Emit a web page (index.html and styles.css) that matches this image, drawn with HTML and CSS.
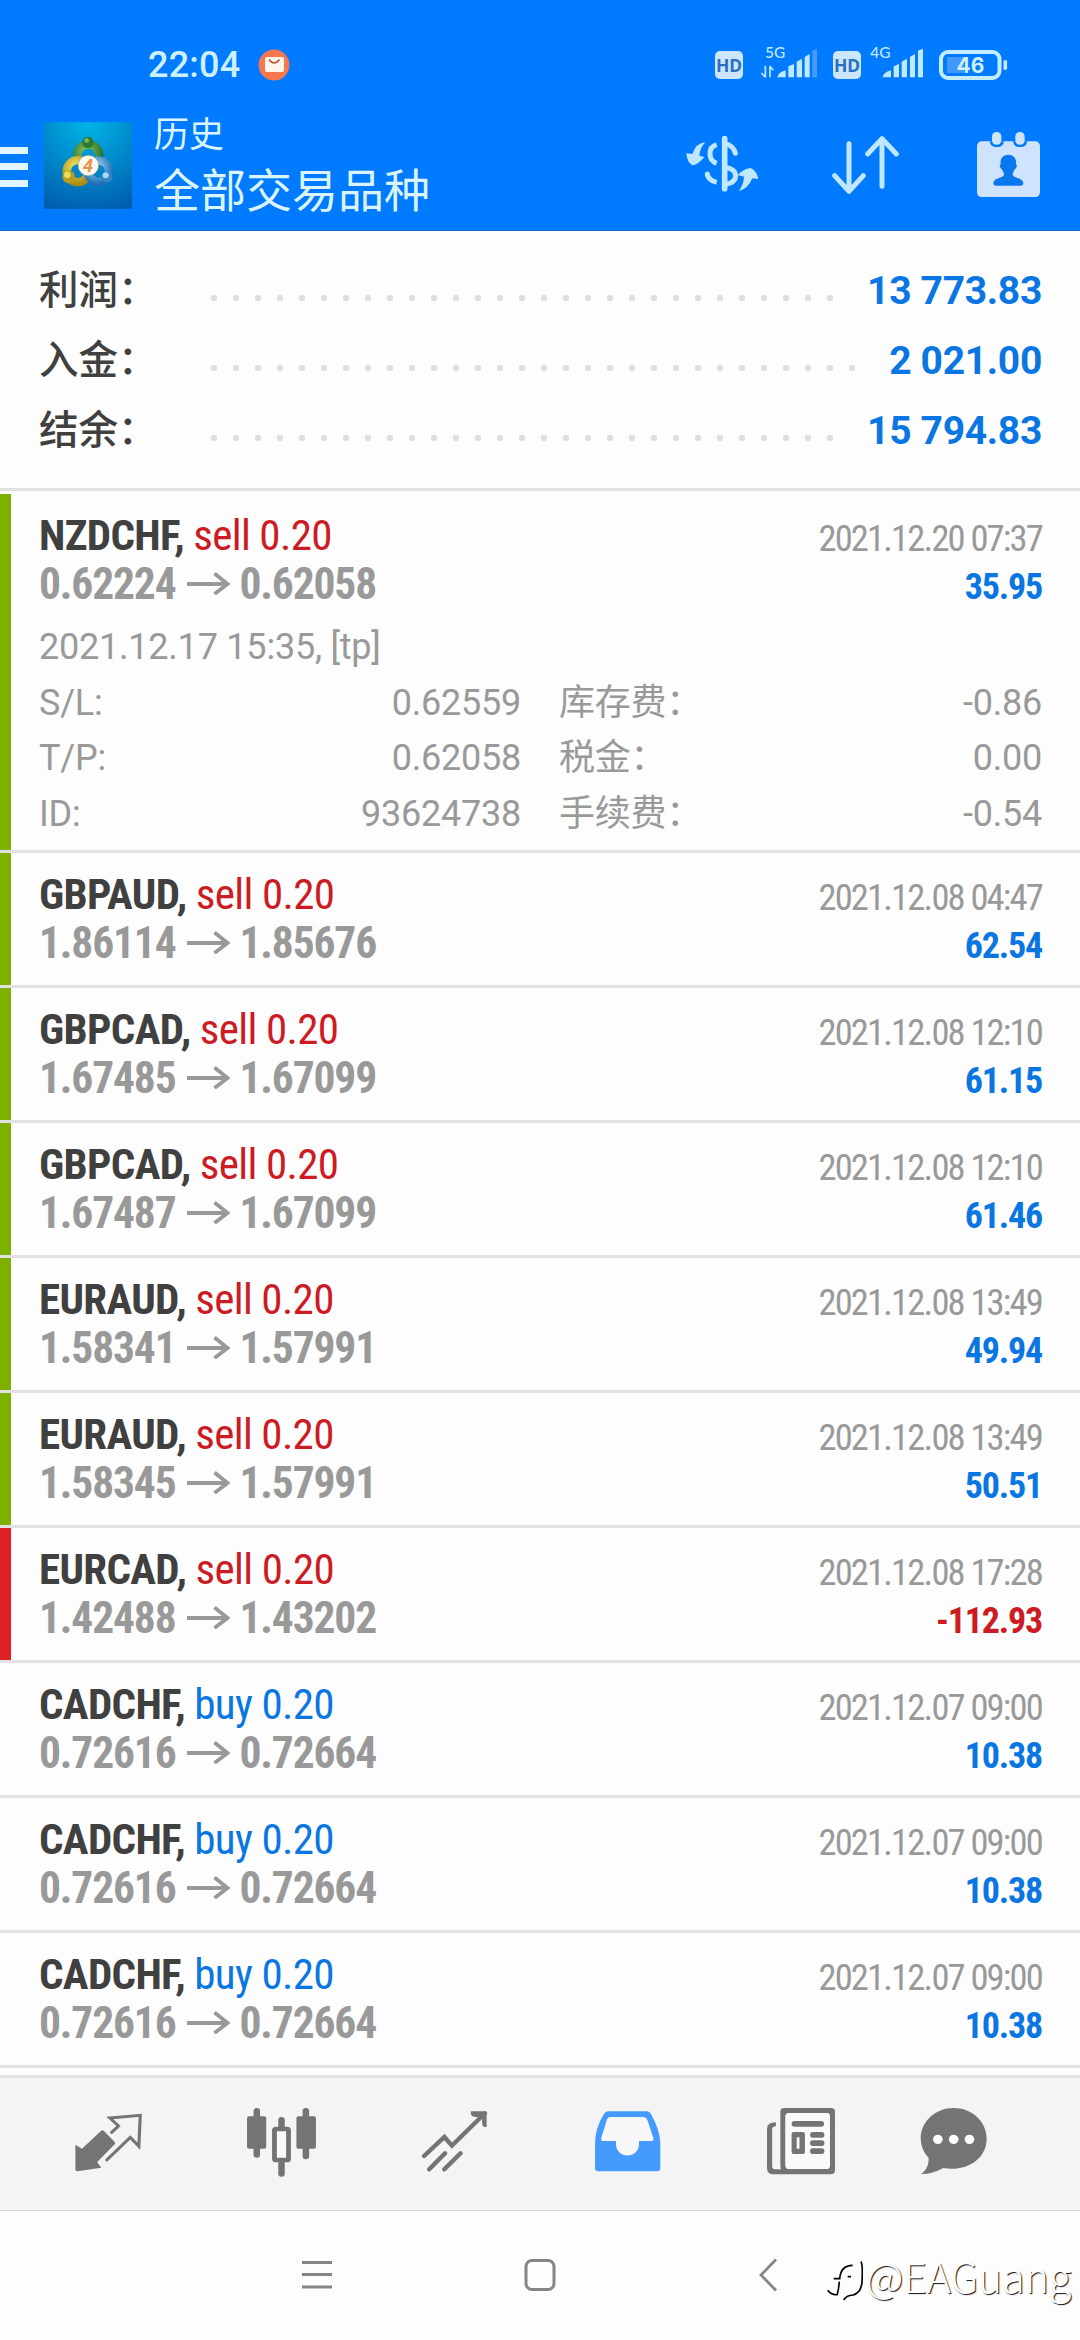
FILE: index.html
```
<!DOCTYPE html>
<html lang="zh-CN">
<head>
<meta charset="utf-8">
<title>历史</title>
<link rel="stylesheet" href="styles.css">
</head>
<body>
<header class="header">
  <div class="status">
    <span class="status__time">22:04</span>
    <svg class="status__mail" width="32" height="32" viewBox="0 0 32 32"><circle cx="16" cy="16" r="15.4" fill="#f9774f"/><rect x="7" y="8" width="19" height="15" rx="2" fill="#fff6ee"/><path d="M11 10.500q5 7 10.500 0" fill="none" stroke="#b9573c" stroke-width="1.600"/></svg>
    <svg class="status__hd" width="28" height="28" viewBox="0 0 28 28"><rect width="28" height="28" rx="5" fill="#cde6ff"/><text x="14" y="20.500" class="hd-text">HD</text></svg>
    <svg class="status__net5" width="56" height="38" viewBox="268 4 168 114"><text x="280" y="56" class="net-text">5G</text><path d="M281 78v35M282 113l-13-13M295 113V79M294 79l11 13" fill="none" stroke="#bfeaff" stroke-width="5"/><g fill="#bdeaff"><path d="M317 113q2-15 25-21v21zM350 113V80l17-7v40zM375 113V66l16-9v56zM399 113V52l15-9v70z"/></g><path d="M422 113V33l14-6v86z" fill="#4a9bff"/></svg>
    <svg class="status__hd2" width="28" height="28" viewBox="0 0 28 28"><rect width="28" height="28" rx="5" fill="#cde6ff"/><text x="14" y="20.500" class="hd-text">HD</text></svg>
    <svg class="status__net4" width="53" height="38" viewBox="597 4 159 114"><text x="598" y="56" class="net-text">4G</text><path fill="#bdeaff" d="M635 113q2-15 25-21v21zM668 113V80l16-7v40zM692 113V66l16-9v56zM717 113V52l15-9v70zM741 113V33l15-6v86z"/></svg>
    <svg class="status__battery" width="69" height="30" viewBox="0 0 69 30"><rect x="8" y="7" width="17" height="16" fill="#4398fb"/><rect x="2" y="2" width="58.500" height="26" rx="7" fill="none" stroke="#c3ecff" stroke-width="4"/><rect x="64.500" y="10" width="3.600" height="10" rx="1.800" fill="#c3ecff"/><text x="31.500" y="23" class="battery-text">46</text></svg>
  </div>
  <div class="appbar">
    <div class="menu"><i></i><i></i><i></i></div>
    <svg class="logo" width="88" height="87" viewBox="42 36 264 260">
      <defs>
        <radialGradient id="bg" cx=".5" cy="0" r="1.050"><stop offset="0" stop-color="#00b4e4"/><stop offset=".5" stop-color="#008acb"/><stop offset="1" stop-color="#005eae"/></radialGradient>
        <radialGradient id="gr" cx=".4" cy=".3" r=".8"><stop offset="0" stop-color="#8fc45c"/><stop offset="1" stop-color="#256f2c"/></radialGradient>
        <radialGradient id="ye" cx=".4" cy=".3" r=".8"><stop offset="0" stop-color="#f4ea6c"/><stop offset="1" stop-color="#a88b10"/></radialGradient>
        <radialGradient id="bl" cx=".4" cy=".3" r=".8"><stop offset="0" stop-color="#a4dcf8"/><stop offset="1" stop-color="#1e70b5"/></radialGradient>
      </defs>
      <rect x="42" y="36" width="264" height="260" fill="url(#bg)"/>
      <circle cx="175" cy="136" r="33" fill="none" stroke="url(#gr)" stroke-width="25"/>
      <circle cx="143" cy="183" r="33" fill="none" stroke="url(#ye)" stroke-width="25"/>
      <circle cx="205" cy="183" r="32" fill="none" stroke="url(#bl)" stroke-width="25"/>
      <circle cx="174" cy="97" r="17" fill="#2f7a33"/><circle cx="170" cy="91" r="7" fill="#7cba68"/>
      <circle cx="116" cy="200" r="19" fill="#b99c1c"/><circle cx="112" cy="194" r="10" fill="#ecdc62"/>
      <circle cx="231" cy="200" r="17" fill="#3585c4"/><circle cx="227" cy="195" r="9" fill="#a4dcf8"/>
      <circle cx="175" cy="166" r="31" fill="#fbf8f0" stroke="#8a9a7a" stroke-width="2"/>
      <text x="174" y="186" class="logo-text">4</text>
    </svg>
    <div class="titles"><div class="titles__sub">历史</div><div class="titles__main">全部交易品种</div></div>
    <svg class="act act--money" width="72" height="65" viewBox="48 275 216 195"><g fill="#bfe8ff"><path d="M106 306Q78 308 67 341L49 339Q51 366 67 375Q86 372 103 350L88 346Q90 322 106 306Z"/><path d="M206 453Q235 444 247 414L265 416Q259 388 241 383Q220 386 203 404L222 409Q221 432 206 453Z"/></g><g fill="none" stroke="#bfe8ff"><path d="M164 295V445" stroke-width="17" stroke-linecap="round"/><path d="M140 313Q119 319 120 342Q121 362 140 369M112 402Q117 421 140 426" stroke-width="15"/><path d="M112 401v2M196 339Q191 316 165 310" stroke-width="15" stroke-linecap="round"/><path d="M168 381Q197 387 197 406Q197 426 168 432" stroke-width="15"/></g></svg>
    <svg class="act act--sort" width="67" height="65" viewBox="485 275 201 195"><path d="M536 310V453M493 406l43 47 43-47M635 438V295M592 341l43-46 43 46" fill="none" stroke="#bfe8ff" stroke-width="15" stroke-linecap="round" stroke-linejoin="round"/></svg>
    <svg class="act act--cal" width="63" height="65" viewBox="920 275 189 195"><rect x="920" y="303" width="189" height="167" rx="14" fill="#cfe3ff"/><path d="M958 303h43q-3 17-17 17h-9q-14 0-17-17zM1028 303h43q-3 17-17 17h-9q-14 0-17-17z" fill="#007aff"/><rect x="965" y="275" width="28" height="38" rx="13" fill="#cfe3ff"/><rect x="1035" y="275" width="28" height="38" rx="13" fill="#cfe3ff"/><path d="M1014 343c18 0 25 14 23 29c5 2 2 12-3 14c-3 7-7 10-7 18c2 10 32 7 32 25q0 7-7 7h-76q-7 0-7-7c0-18 30-15 32-25c0-8-4-11-7-18c-5-2-8-12-3-14c-2-15 5-29 23-29z" fill="#0878ee"/></svg>
  </div>
</header>

<section class="summary">
  <div class="sum"><span class="sum__label">利润：</span><span class="sum__dots"></span><span class="sum__value">13 773.83</span></div>
  <div class="sum"><span class="sum__label">入金：</span><span class="sum__dots sum__dots--long"></span><span class="sum__value">2 021.00</span></div>
  <div class="sum"><span class="sum__label">结余：</span><span class="sum__dots"></span><span class="sum__value">15 794.83</span></div>
</section>

<svg class="defs" width="0" height="0"><symbol id="arrow" viewBox="0 0 43 23"><path d="M0 12H40M27.500 1.500L40.500 12L27.500 22" fill="none" stroke="#999" stroke-width="3.800"/></symbol></svg>

<main class="list">
  <article class="row row--win row--open">
    <div class="deal">
      <div><div class="deal__name"><b>NZDCHF,</b> <span class="sell">sell 0.20</span></div><div class="deal__price"><span>0.62224</span><svg><use href="#arrow"/></svg><span>0.62058</span></div></div>
      <div class="deal__right"><div class="deal__date">2021.12.20 07:37</div><div class="deal__sum">35.95</div></div>
    </div>
    <div class="details">
      <div class="details__time">2021.12.17 15:35, [tp]</div>
      <div class="pair"><span>S/L:</span><span>0.62559</span></div><div class="pair"><span>库存费：</span><span>-0.86</span></div>
      <div class="pair"><span>T/P:</span><span>0.62058</span></div><div class="pair"><span>税金：</span><span>0.00</span></div>
      <div class="pair"><span>ID:</span><span>93624738</span></div><div class="pair"><span>手续费：</span><span>-0.54</span></div>
    </div>
  </article>
  <article class="row row--win"><div class="deal">
    <div><div class="deal__name"><b>GBPAUD,</b> <span class="sell">sell 0.20</span></div><div class="deal__price"><span>1.86114</span><svg><use href="#arrow"/></svg><span>1.85676</span></div></div>
    <div class="deal__right"><div class="deal__date">2021.12.08 04:47</div><div class="deal__sum">62.54</div></div>
  </div></article>
  <article class="row row--win"><div class="deal">
    <div><div class="deal__name"><b>GBPCAD,</b> <span class="sell">sell 0.20</span></div><div class="deal__price"><span>1.67485</span><svg><use href="#arrow"/></svg><span>1.67099</span></div></div>
    <div class="deal__right"><div class="deal__date">2021.12.08 12:10</div><div class="deal__sum">61.15</div></div>
  </div></article>
  <article class="row row--win"><div class="deal">
    <div><div class="deal__name"><b>GBPCAD,</b> <span class="sell">sell 0.20</span></div><div class="deal__price"><span>1.67487</span><svg><use href="#arrow"/></svg><span>1.67099</span></div></div>
    <div class="deal__right"><div class="deal__date">2021.12.08 12:10</div><div class="deal__sum">61.46</div></div>
  </div></article>
  <article class="row row--win"><div class="deal">
    <div><div class="deal__name"><b>EURAUD,</b> <span class="sell">sell 0.20</span></div><div class="deal__price"><span>1.58341</span><svg><use href="#arrow"/></svg><span>1.57991</span></div></div>
    <div class="deal__right"><div class="deal__date">2021.12.08 13:49</div><div class="deal__sum">49.94</div></div>
  </div></article>
  <article class="row row--win"><div class="deal">
    <div><div class="deal__name"><b>EURAUD,</b> <span class="sell">sell 0.20</span></div><div class="deal__price"><span>1.58345</span><svg><use href="#arrow"/></svg><span>1.57991</span></div></div>
    <div class="deal__right"><div class="deal__date">2021.12.08 13:49</div><div class="deal__sum">50.51</div></div>
  </div></article>
  <article class="row row--loss"><div class="deal">
    <div><div class="deal__name"><b>EURCAD,</b> <span class="sell">sell 0.20</span></div><div class="deal__price"><span>1.42488</span><svg><use href="#arrow"/></svg><span>1.43202</span></div></div>
    <div class="deal__right"><div class="deal__date">2021.12.08 17:28</div><div class="deal__sum deal__sum--neg">-112.93</div></div>
  </div></article>
  <article class="row"><div class="deal">
    <div><div class="deal__name"><b>CADCHF,</b> <span class="buy">buy 0.20</span></div><div class="deal__price"><span>0.72616</span><svg><use href="#arrow"/></svg><span>0.72664</span></div></div>
    <div class="deal__right"><div class="deal__date">2021.12.07 09:00</div><div class="deal__sum">10.38</div></div>
  </div></article>
  <article class="row"><div class="deal">
    <div><div class="deal__name"><b>CADCHF,</b> <span class="buy">buy 0.20</span></div><div class="deal__price"><span>0.72616</span><svg><use href="#arrow"/></svg><span>0.72664</span></div></div>
    <div class="deal__right"><div class="deal__date">2021.12.07 09:00</div><div class="deal__sum">10.38</div></div>
  </div></article>
  <article class="row"><div class="deal">
    <div><div class="deal__name"><b>CADCHF,</b> <span class="buy">buy 0.20</span></div><div class="deal__price"><span>0.72616</span><svg><use href="#arrow"/></svg><span>0.72664</span></div></div>
    <div class="deal__right"><div class="deal__date">2021.12.07 09:00</div><div class="deal__sum">10.38</div></div>
  </div></article>
</main>

<nav class="tabs">
  <svg width="69" height="70" viewBox="215 140 200 210" preserveAspectRatio="none"><path fill="#747474" d="M219 253l19 12 56-54q4-3 8 1l31 33q3 4 0 7l-51 53 12 17-69 11q-6 0-6-6z"/><path d="M324 216l20-19-25-24 88-8-4 93-25-27-68 68" fill="none" stroke="#747474" stroke-width="9" stroke-linecap="round"/></svg>
  <svg width="71" height="70" viewBox="713 140 207 210" preserveAspectRatio="none"><g fill="#747474"><rect x="716" y="168" width="56" height="97" rx="6"/><rect x="860" y="168" width="57" height="97" rx="6"/><rect x="735" y="143" width="19" height="149" rx="9"/><rect x="878" y="143" width="19" height="154" rx="9"/><rect x="807" y="170" width="19" height="40" rx="9"/><rect x="807" y="295" width="19" height="54" rx="9"/></g><rect x="796" y="206" width="41" height="93" rx="4" fill="#fafafa" stroke="#747474" stroke-width="14"/></svg>
  <svg width="67" height="70" viewBox="1221 140 195 210" preserveAspectRatio="none"><path d="M1230 287l59-57 22 26 96-97M1245 327l46-48M1289 327l47-48" fill="none" stroke="#747474" stroke-width="13" stroke-linecap="round"/><path d="M1366 153h41q5 0 5 5v42h-6q-7-2-7-10v-20h-21q-9 0-12-8z" fill="#747474"/></svg>
  <svg width="67" height="70" viewBox="157 140 195 210" preserveAspectRatio="none"><path d="M198 153H311q8 0 12 8q27 50 27 90v72q0 10-10 10H170q-10 0-10-10V251q0-48 26-90q4-8 12-8z" fill="#449bfd"/><path d="M205 170H301q7 0 11 8l18 56q2 8-6 8H288v10a33 33 0 0 1-67 0v-10H184q-8 0-6-8l16-54q3-10 11-10z" fill="#f8f8f8"/></svg>
  <svg width="70" height="70" viewBox="656 140 205 210" preserveAspectRatio="none"><path fill="#747474" fill-rule="evenodd" d="M709 143H847q11 0 11 11V329q0 13-13 13H678q-19 0-19-19V205q0-19 26-19v12q-11 1-11 8V318q0 9 9 9h17q-2-5-2-12V154q0-11 11-11zM724 158q-11 0-11 11V315q0 11 11 11h110q9 0 9-11V169q0-11-9-11z"/><path fill="#fafafa" d="M724 158h110q9 0 9 11V315q0 11-9 11H724q-11 0-11-11V169q0-11 11-11z"/><g fill="#747474"><rect x="731" y="182" width="95" height="17" rx="8"/><rect x="785" y="215" width="42" height="17" rx="8"/><rect x="785" y="240" width="42" height="17" rx="8"/><rect x="785" y="264" width="42" height="17" rx="8"/><path fill-rule="evenodd" d="M737 215h27q6 0 6 6v54q0 6-6 6h-27q-6 0-6-6v-54q0-6 6-6zM746 231v34h8v-34z"/></g></svg>
  <svg width="67" height="70" viewBox="1101 140 195 210" preserveAspectRatio="none"><path fill="#747474" d="M1199 143c54 0 96 41 96 92c0 62-60 100-126 88q-34 19-65 18c17-12 23-30 22-49q-22-23-23-57c0-51 42-92 96-92z"/><g fill="#fff"><circle cx="1153" cy="237" r="14"/><circle cx="1199" cy="237" r="14"/><circle cx="1245" cy="237" r="14"/></g></svg>
</nav>

<footer class="sysnav">
  <svg class="sysnav__menu" width="30" height="34" viewBox="0 0 30 34"><path d="M0 4.500H30M0 16.500H30M0 29H30" stroke="#858585" stroke-width="2.800"/></svg>
  <svg class="sysnav__home" width="32" height="34" viewBox="0 0 32 34"><rect x="2" y="2.500" width="28" height="29" rx="6" fill="none" stroke="#858585" stroke-width="3"/></svg>
  <svg class="sysnav__back" width="18" height="34" viewBox="0 0 18 34"><path d="M17 1.500L2 17L17 32.500" fill="none" stroke="#858585" stroke-width="2.800"/></svg>
  <div class="mark">
    <svg width="36" height="42" viewBox="46 66 108 126"><path d="M66 125h18q3-40 39-40M108 119h10M148 74q6 12 3 62q-3 32-27 38q-20 1-28 15M83 134q-3 30-7 39q-17 2-28-13" fill="none" stroke="#000" stroke-width="5"/></svg>
    <span>@EAGuang</span>
  </div>
</footer>
</body>
</html>
```
FILE: styles.css
```
* { box-sizing: border-box; }

body {
  margin: 0;
  width: 1080px;
  height: 2340px;
  overflow: hidden;
  position: relative;
  background: #fdfdfd;
  font-family: Roboto, "Noto Sans CJK SC", sans-serif;
  color: #404040;
}

svg { display: block; flex: none; }
.defs { position: absolute; }

/* Header */
.header { height: 231px; background: #007aff; border-bottom: 1px solid #1470cf; }

.status { display: flex; align-items: center; height: 102px; padding: 28px 72px 0 148px; }
.status__time { font-size: 36px; font-weight: 500; line-height: 40px; letter-spacing: .2px; color: #cdf0ff; }
.status__mail { margin-left: 18px; }
.status__hd { margin-left: auto; }
.status__net5 { margin: -10px 0 0 18px; }
.status__hd2 { margin-left: 16px; }
.status__net4 { margin: -10px 0 0 9px; }
.status__battery { margin-left: 16px; }
.hd-text { font: 700 17.500px "Noto Sans", sans-serif; fill: #2a6fc0; text-anchor: middle; }
.net-text { font: 500 46px Lato, sans-serif; fill: #bfeaff; }
.battery-text { font: 700 21px Inter, sans-serif; fill: #cdf0ff; text-anchor: middle; }
.logo-text { font: italic 700 56px Roboto, sans-serif; fill: #e8944a; text-anchor: middle; }

.appbar { display: flex; align-items: flex-start; height: 128px; padding-right: 40px; }
.menu { display: grid; gap: 9.500px; width: 27.500px; margin-top: 44.500px; }
.menu i { height: 7.200px; background: #dff6ff; }
.logo { margin: 20px 0 0 16.500px; }
.titles { margin: 4px 0 0 22px; font-family: "Noto Sans CJK SC", sans-serif; color: #daf5ff; }
.titles__sub { font-size: 35px; line-height: 52px; }
.titles__main { font-size: 46px; line-height: 58px; }
.act { margin-top: 30px; }
.act--money { margin-left: auto; }
.act--sort { margin-left: 74px; }
.act--cal { margin-left: 78px; }

/* Account totals */
.summary { height: 260px; padding: 25px 38px 0 39px; border-bottom: 3px solid #e1e1e1; }
.sum { display: flex; align-items: center; height: 70px; line-height: 70px; }
.sum__label { width: 163.500px; font-size: 39.500px; font-weight: 500; }
.sum__dots {
  width: 638px;
  height: 22px;
  margin-top: 13px;
  background: radial-gradient(circle at center, #dedede 2.800px, transparent 3.600px) 0 0 / 22px 22px repeat-x;
}
.sum__dots--long { width: 660px; }
.sum__value { margin-left: auto; font-size: 39px; font-weight: 700; letter-spacing: -.3px; color: #0a76e2; }

/* Deals */
.list { padding-top: 3px; height: 1584px; }
.row {
  display: flow-root;
  height: 135px;
  padding: 0 38px 0 39px;
  border-bottom: 3px solid #e1e1e1;
  background: linear-gradient(var(--bar, transparent), var(--bar, transparent)) 0 0 / 11px 100% no-repeat;
  background-clip: padding-box;
}
.row--win { --bar: #7db000; }
.row--loss { --bar: #df2024; }
.row--open { height: 359px; }

.deal { display: flex; justify-content: space-between; height: 132px; padding-top: 17px; font-family: "Roboto Condensed", Roboto, sans-serif; }
.row--open .deal { height: 126px; }
.deal__name { font-size: 43px; line-height: 49px; letter-spacing: -.65px; white-space: nowrap; }
.deal__name b { font-weight: 700; }
.sell { color: #cc1b23; }
.buy { color: #0a76e2; }
.deal__price { display: flex; align-items: center; font-size: 43.500px; line-height: 49px; letter-spacing: -1.150px; font-weight: 700; color: #999; }
.deal__price svg { width: 43px; height: 23px; margin: 0 10px 2px 11px; }
.deal__right { padding-top: 4px; text-align: right; line-height: 48px; }
.deal__date { font-size: 36.500px; letter-spacing: -1.800px; color: #999; }
.deal__sum { font-size: 36px; letter-spacing: -1.200px; font-weight: 700; color: #0a76e2; }
.deal__sum--neg { color: #cc1b23; }

.details { display: grid; grid-template-columns: 482px 483px; column-gap: 38px; font-size: 36px; line-height: 55.600px; letter-spacing: -.22px; color: #999; }
.details__time { grid-column: 1 / -1; }
.pair { display: flex; justify-content: space-between; }

/* Bottom tabs */
.tabs {
  display: grid;
  grid-template-columns: repeat(5, 173px) 133px;
  align-items: center;
  justify-items: center;
  height: 136px;
  padding: 0 0 5px 22px;
  background: #f4f4f4;
  border-top: 3px solid #e1e1e1;
  border-bottom: 1px solid #d6d6d6;
}

/* System navigation */
.sysnav { display: flex; align-items: center; position: relative; height: 129px; padding: 0 0 1px 302px; }
.sysnav__home { margin-left: 192px; }
.sysnav__back { margin-left: 203px; }
.mark {
  position: absolute;
  left: 827px;
  top: 34px;
  display: flex;
  align-items: center;
  gap: 3px;
  font: 300 41px/60px "Noto Sans CJK SC", sans-serif;
  color: #fff;
  text-shadow: 1px 1px 1px #111;
}
.mark svg { margin-top: 9px; }
```
